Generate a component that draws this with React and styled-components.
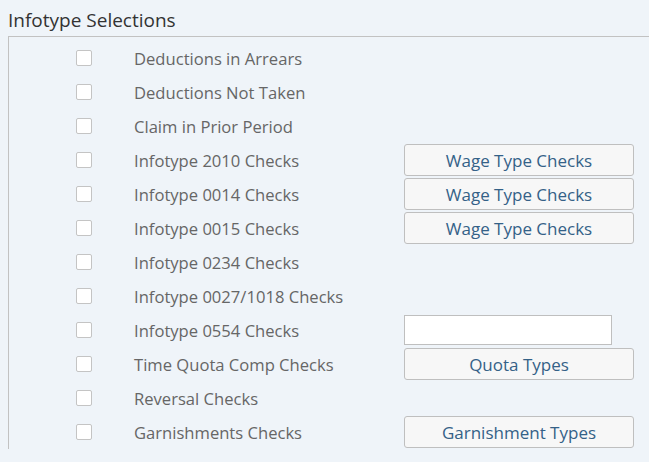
import styled, { createGlobalStyle } from 'styled-components';

const GlobalStyle = createGlobalStyle`
  html, body {
    margin: 0;
    padding: 0;
    background: #eff4f9;
    font-family: "Open Sans", "Liberation Sans", sans-serif;
  }
`;

const Page = styled.div`
  width: 649px;
  height: 462px;
  overflow: hidden;
  background: #eff4f9;
`;

const Title = styled.div`
  height: 36px;
  line-height: 40px;
  padding-left: 8px;
  font-size: 19px;
  color: #333333;
`;

const Group = styled.div`
  margin-left: 8px;
  border-left: 1px solid #c2c2c2;
  border-top: 1px solid #c2c2c2;
  padding: 4px 0 0 67px;
`;

const Row = styled.div`
  display: grid;
  grid-template-columns: 16px 228px 230px;
  column-gap: 42px;
  align-items: center;
  height: 34px;
`;

const Check = styled.span`
  width: 14px;
  height: 14px;
  background: #ffffff;
  border: 1px solid #c4c4c4;
  border-radius: 2px;
`;

const Label = styled.span`
  font-size: 16.6px;
  color: #666666;
  white-space: nowrap;
`;

const Button = styled.button`
  height: 32px;
  width: 230px;
  padding: 0;
  background: #f7f7f7;
  border: 1px solid #bfbfbf;
  border-radius: 3px;
  color: #346187;
  font-family: inherit;
  font-size: 17px;
`;

const Input = styled.input`
  box-sizing: border-box;
  height: 30px;
  width: 208px;
  background: #ffffff;
  border: 1px solid #bfbfbf;
  border-radius: 0;
  margin: 0;
`;

const rows = [
  { label: 'Deductions in Arrears' },
  { label: 'Deductions Not Taken' },
  { label: 'Claim in Prior Period' },
  { label: 'Infotype 2010 Checks', button: 'Wage Type Checks' },
  { label: 'Infotype 0014 Checks', button: 'Wage Type Checks' },
  { label: 'Infotype 0015 Checks', button: 'Wage Type Checks' },
  { label: 'Infotype 0234 Checks' },
  { label: 'Infotype 0027/1018 Checks' },
  { label: 'Infotype 0554 Checks', input: true },
  { label: 'Time Quota Comp Checks', button: 'Quota Types' },
  { label: 'Reversal Checks' },
  { label: 'Garnishments Checks', button: 'Garnishment Types' },
];

export default function App() {
  return (
    <Page>
      <GlobalStyle />
      <Title>Infotype Selections</Title>
      <Group>
        {rows.map((r, i) => (
          <Row key={i}>
            <Check role="checkbox" aria-checked="false" />
            <Label>{r.label}</Label>
            {r.button && <Button>{r.button}</Button>}
            {r.input && <Input />}
          </Row>
        ))}
      </Group>
    </Page>
  );
}
